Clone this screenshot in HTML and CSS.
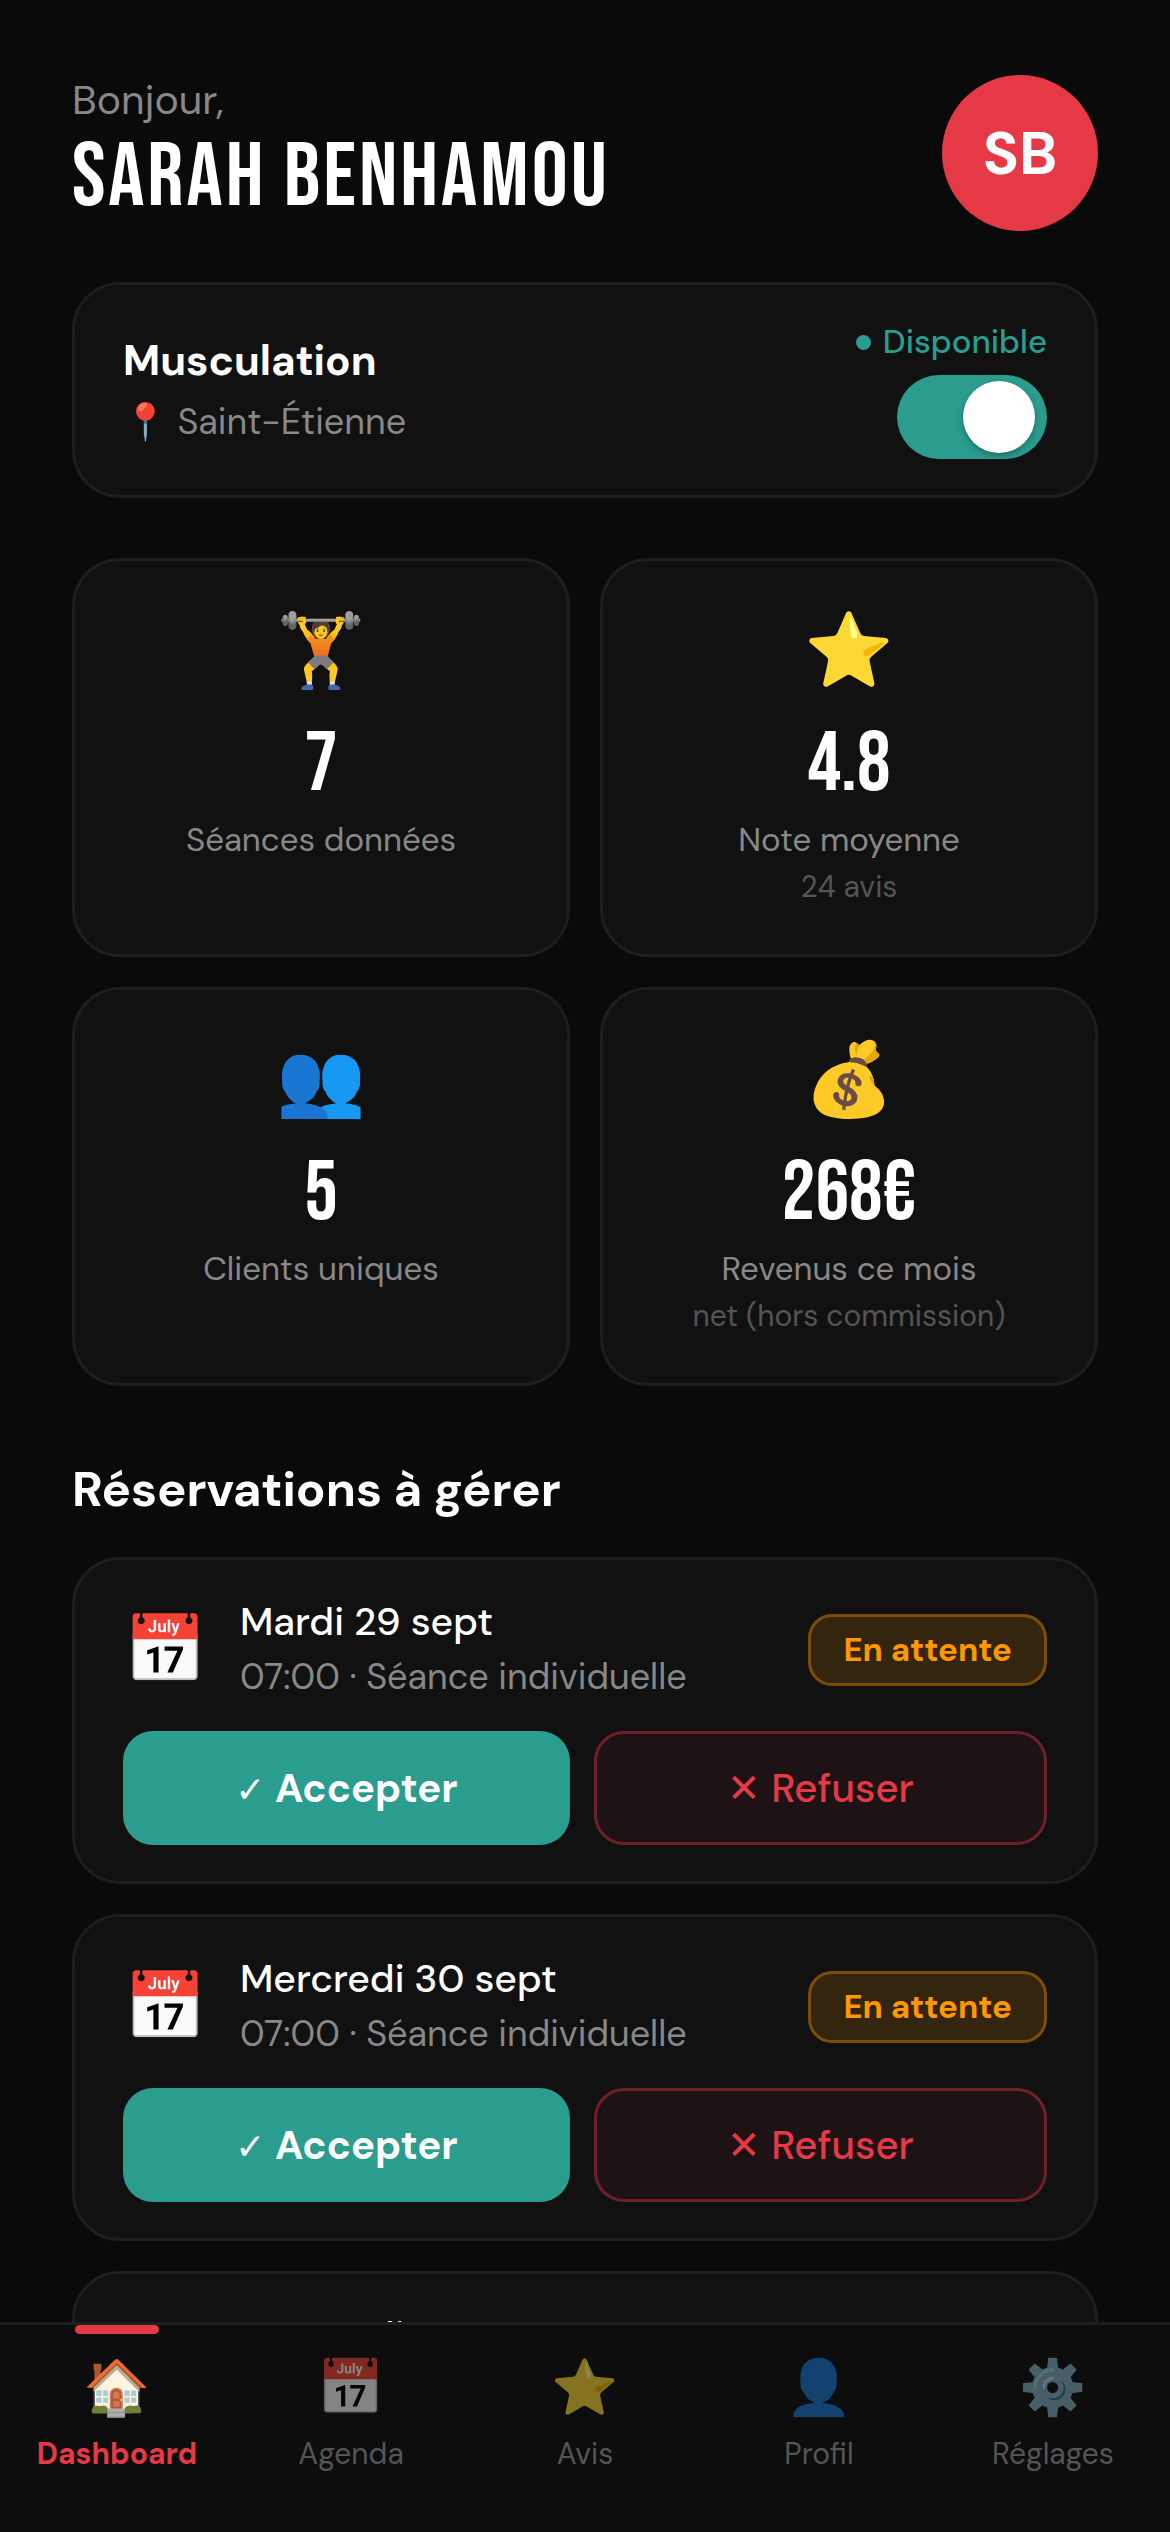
FILE: index.html
```html
<!DOCTYPE html>
<html lang="fr">
<head>
    <meta charset="UTF-8">
    <meta name="viewport" content="width=device-width, initial-scale=1.0">
    <title>Dashboard coach</title>
    <link rel="stylesheet" href="styles.css">
</head>
<body>
    <main class="content">
        <header class="header">
            <div>
                <p class="greeting">Bonjour,</p>
                <h1 class="coach-name">SARAH BENHAMOU</h1>
            </div>
            <div class="avatar">SB</div>
        </header>

        <!-- Availability -->
        <section class="card availability">
            <div class="speciality">
                <h2 class="speciality-name">Musculation</h2>
                <p class="location"><span class="emoji">📍</span> Saint-Étienne</p>
            </div>
            <div class="status">
                <label class="status-label" for="available">Disponible</label>
                <input type="checkbox" id="available" class="toggle" checked>
            </div>
        </section>

        <!-- Stats -->
        <section class="stats">
            <div class="card stat">
                <span class="stat-icon emoji">🏋️</span>
                <strong class="stat-value">7</strong>
                <span class="stat-label">Séances données</span>
            </div>
            <div class="card stat">
                <span class="stat-icon emoji">⭐</span>
                <strong class="stat-value">4.8</strong>
                <span class="stat-label">Note moyenne</span>
                <span class="stat-sub">24 avis</span>
            </div>
            <div class="card stat">
                <span class="stat-icon emoji">👥</span>
                <strong class="stat-value">5</strong>
                <span class="stat-label">Clients uniques</span>
            </div>
            <div class="card stat">
                <span class="stat-icon emoji">💰</span>
                <strong class="stat-value">268€</strong>
                <span class="stat-label">Revenus ce mois</span>
                <span class="stat-sub">net (hors commission)</span>
            </div>
        </section>

        <!-- Bookings -->
        <h2 class="section-title">Réservations à gérer</h2>
        <section class="bookings">
            <article class="card booking">
                <div class="booking-row">
                    <span class="booking-icon emoji">📅</span>
                    <div class="booking-info">
                        <h3 class="booking-date">Mardi 29 sept</h3>
                        <p class="booking-detail">07:00 · Séance individuelle</p>
                    </div>
                    <span class="badge">En attente</span>
                </div>
                <div class="booking-actions">
                    <button class="btn btn-accept"><span class="mark">✓</span> Accepter</button>
                    <button class="btn btn-refuse">✕ Refuser</button>
                </div>
            </article>
            <article class="card booking">
                <div class="booking-row">
                    <span class="booking-icon emoji">📅</span>
                    <div class="booking-info">
                        <h3 class="booking-date">Mercredi 30 sept</h3>
                        <p class="booking-detail">07:00 · Séance individuelle</p>
                    </div>
                    <span class="badge">En attente</span>
                </div>
                <div class="booking-actions">
                    <button class="btn btn-accept"><span class="mark">✓</span> Accepter</button>
                    <button class="btn btn-refuse">✕ Refuser</button>
                </div>
            </article>
            <article class="card booking">
                <div class="booking-row">
                    <span class="booking-icon emoji">📅</span>
                    <div class="booking-info">
                        <h3 class="booking-date">Mercredi 30 sept</h3>
                        <p class="booking-detail">07:00 · Séance individuelle</p>
                    </div>
                    <span class="badge">En attente</span>
                </div>
                <div class="booking-actions">
                    <button class="btn btn-accept"><span class="mark">✓</span> Accepter</button>
                    <button class="btn btn-refuse">✕ Refuser</button>
                </div>
            </article>
        </section>
    </main>

    <nav class="tab-bar">
        <a href="#dashboard" class="tab active"><span class="tab-icon emoji">🏠</span>Dashboard</a>
        <a href="#agenda" class="tab"><span class="tab-icon emoji">📅</span>Agenda</a>
        <a href="#avis" class="tab"><span class="tab-icon emoji">⭐</span>Avis</a>
        <a href="#profil" class="tab"><span class="tab-icon emoji">👤</span>Profil</a>
        <a href="#reglages" class="tab"><span class="tab-icon emoji">⚙️</span>Réglages</a>
    </nav>
</body>
</html>
```
FILE: styles.css
```css
* {
    margin: 0;
    padding: 0;
    box-sizing: border-box;
}

body {
    height: 100vh;
    display: flex;
    flex-direction: column;
    background-color: #0a0a0a;
    color: #fff;
    font-family: 'DM Sans', 'Inter', sans-serif;
}

.emoji {
    font-family: 'Noto Color Emoji', sans-serif;
}

.content {
    flex: 1;
    min-height: 0;
    overflow-y: auto;
    scrollbar-width: none;
    padding: 75px 72px;
}

/* Header */
.header {
    display: flex;
    justify-content: space-between;
    align-items: flex-start;
    margin-bottom: 51px;
}

.greeting {
    font-size: 41px;
    line-height: 51px;
    color: #888;
}

.coach-name {
    font-family: 'Bebas Neue', 'Open Sans Condensed', sans-serif;
    font-size: 90px;
    font-weight: 400;
    line-height: 105px;
    letter-spacing: 3px;
}

.avatar {
    width: 156px;
    height: 156px;
    border-radius: 50%;
    display: flex;
    align-items: center;
    justify-content: center;
    background-color: #e63946;
    font-size: 60px;
    font-weight: 700;
}

/* Cards */
.card {
    background-color: #111;
    border: 3px solid #1e1e1e;
    border-radius: 48px;
}

.availability {
    display: flex;
    justify-content: space-between;
    align-items: center;
    padding: 36px 48px;
    margin-bottom: 60px;
}

.speciality {
    display: flex;
    flex-direction: column;
    gap: 6px;
}

.speciality-name {
    font-size: 42px;
    font-weight: 700;
    line-height: 57px;
}

.location {
    font-size: 36px;
    line-height: 54px;
    color: #888;
}

.status {
    display: flex;
    flex-direction: column;
    align-items: flex-end;
    gap: 12px;
}

.status-label {
    display: flex;
    align-items: center;
    gap: 12px;
    font-size: 33px;
    font-weight: 500;
    line-height: 42px;
    color: #2a9d8f;
}

.status-label::before {
    content: '';
    width: 15px;
    height: 15px;
    border-radius: 50%;
    background-color: #2a9d8f;
}

.toggle {
    appearance: none;
    display: flex;
    width: 150px;
    height: 84px;
    padding: 6px 12px;
    border-radius: 42px;
    background-color: #333;
    cursor: pointer;
}

.toggle::before {
    content: '';
    width: 72px;
    height: 72px;
    border-radius: 50%;
    background-color: #fff;
    box-shadow: 0 3px 6px rgba(0, 0, 0, 0.3);
}

.toggle:checked {
    justify-content: flex-end;
    background-color: #2a9d8f;
}

/* Stats */
.stats {
    display: grid;
    grid-template-columns: 1fr 1fr;
    gap: 30px;
    margin-bottom: 72px;
}

.stat {
    display: flex;
    flex-direction: column;
    align-items: center;
    padding: 48px;
}

.stat-icon {
    margin-bottom: 30px;
    font-size: 72px;
    line-height: 84px;
}

.stat-value {
    margin-bottom: 12px;
    font-family: 'Bebas Neue', 'Open Sans Condensed', sans-serif;
    font-size: 84px;
    font-weight: 400;
    line-height: 84px;
}

.stat-label {
    font-size: 33px;
    line-height: 42px;
    color: #888;
}

.stat-sub {
    margin-top: 6px;
    font-size: 30px;
    line-height: 39px;
    color: #555;
}

/* Bookings */
.section-title {
    margin-bottom: 36px;
    font-size: 49px;
    font-weight: 700;
    line-height: 63px;
}

.bookings {
    display: flex;
    flex-direction: column;
    gap: 30px;
}

.booking {
    display: flex;
    flex-direction: column;
    gap: 27px;
    padding: 36px 48px;
}

.booking-row {
    display: flex;
    align-items: center;
    gap: 33px;
}

.booking-icon {
    width: 84px;
    font-size: 66px;
    line-height: 78px;
    text-align: center;
}

.booking-info {
    flex: 1;
}

.booking-date {
    margin-bottom: 3px;
    font-size: 39px;
    font-weight: 500;
    line-height: 51px;
}

.booking-detail {
    font-size: 36px;
    line-height: 54px;
    color: #888;
}

.badge {
    padding: 12px 32px;
    border: 3px solid rgba(255, 152, 0, 0.35);
    border-radius: 24px;
    background-color: rgba(255, 152, 0, 0.15);
    color: #ff9800;
    font-size: 33px;
    font-weight: 700;
    line-height: 42px;
}

.booking-actions {
    display: flex;
    gap: 24px;
}

.btn {
    flex: 1;
    min-height: 114px;
    border: none;
    border-radius: 30px;
    font-family: inherit;
    font-size: 40px;
    cursor: pointer;
}

.btn-accept {
    background-color: #2a9d8f;
    color: #fff;
    font-weight: 700;
}

.btn-refuse {
    border: 3px solid rgba(230, 57, 70, 0.4);
    background-color: rgba(230, 57, 70, 0.06);
    color: #e63946;
    font-weight: 500;
}

.mark {
    font-family: 'DejaVu Sans', sans-serif;
    font-size: 36px;
    font-weight: 400;
}

/* Bottom tabs */
.tab-bar {
    display: flex;
    height: 210px;
    border-top: 3px solid #1e1e1e;
    background-color: #0d0d0d;
}

.tab {
    position: relative;
    flex: 1;
    display: flex;
    flex-direction: column;
    align-items: center;
    gap: 15px;
    padding-top: 30px;
    color: #555;
    font-size: 30px;
    line-height: 36px;
    text-decoration: none;
}

.tab-icon {
    font-size: 54px;
    line-height: 66px;
    opacity: 0.5;
}

.tab.active {
    color: #e63946;
    font-weight: 700;
}

.tab.active .tab-icon {
    opacity: 1;
}

/* Indicator on top of the current tab */
.tab.active::before {
    content: '';
    position: absolute;
    top: 0;
    left: calc(50% - 42px);
    width: 84px;
    height: 9px;
    border-radius: 6px;
    background-color: #e63946;
}
```
